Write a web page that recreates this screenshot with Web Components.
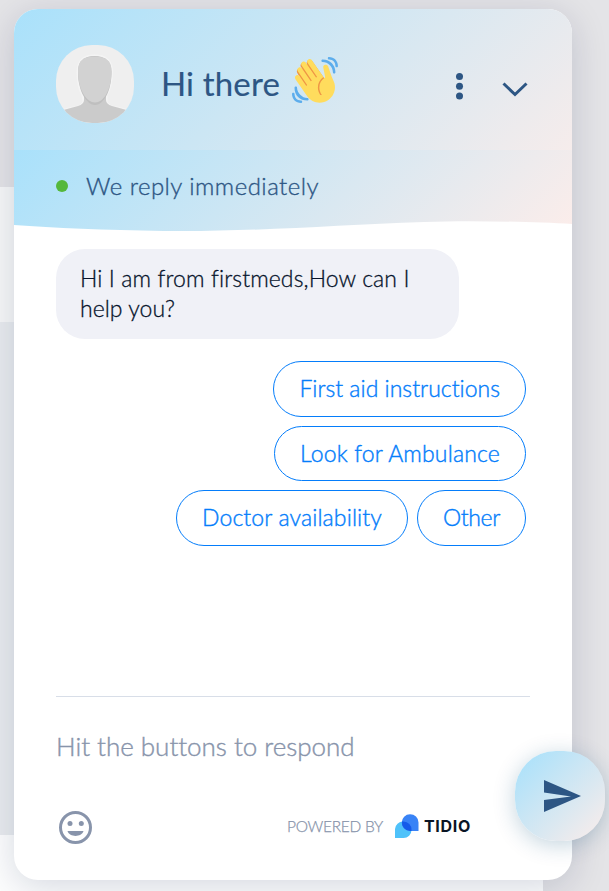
<!DOCTYPE html>
<html lang="en">
<head>
<meta charset="utf-8">
<title>Chat</title>
<style>
html,body{margin:0;height:891px;overflow:hidden}
body{font-family:Lato,"Open Sans",sans-serif;background:linear-gradient(#f7f8f8,#f7f8f8) 0 187px/14px 135px no-repeat,linear-gradient(#fdfefe,#fdfefe) 0 835px/543px 56px no-repeat,linear-gradient(#e9ecef,#e9ecef) 0 322px/14px 513px no-repeat,#e4e4e7}
</style>
</head>
<body>
<chat-window></chat-window>
<script>
const define = (name, html, setup) => customElements.define(name, class extends HTMLElement {
  connectedCallback() {
    if (this.shadowRoot) return;
    this.attachShadow({mode: 'open'}).innerHTML = html;
    if (setup) setup.call(this, this.shadowRoot);
  }
});

/* A single line of text whose tracking is adjusted to fill the given width. */
define('fit-line', `<style>:host{display:block;white-space:nowrap}span{display:inline-block}</style><span><slot></slot></span>`, function (root) {
  const span = root.querySelector('span');
  const target = +this.getAttribute('w');
  const spacing = (target - span.getBoundingClientRect().width) / this.textContent.length;
  span.style.letterSpacing = spacing.toFixed(3) + 'px';
});

define('user-avatar', `<style>:host{display:block;width:78px;height:78px;border-radius:36px;overflow:hidden;background:#efefef}svg{display:block}</style>
<svg width="78" height="78" viewBox="0 0 78 78"><path d="M0 67 22 62Q28 60 28 56L27 50Q22 42 22 27 22 11 38.500 11 55.500 11 55.500 27 55 42 50 50V56Q50 60 56 62L78 67V78H0Z" fill="none" stroke="#f4f4f4" stroke-width="3"/><path d="M0 67 22 61Q28 59 28 55V47H50V55Q50 59 56 61L78 67V78H0Z" fill="#cbcbcb"/><path d="M22 27C22 16 28 11 38.500 11S55.500 16 55.500 27C55.500 47 47 60 39 60S22 47 22 27Z" fill="#bfbfbf"/><path d="M22 26C22 15 28 11.500 38.500 11.500S55.500 15 55.500 26C55.500 46 47 57.500 39 57.500S22 46 22 26Z" fill="#d2d2d2"/></svg>`);

define('wave-emoji', `<style>:host{display:block}svg{display:block}</style><svg width="46" height="46" viewBox="0 0 36 36"><path fill="#EF9645" d="M4.861 9.147c.94-.657 2.357-.531 3.201.166l-.968-1.407c-.779-1.111-.5-2.313.612-3.093 1.112-.777 4.263 1.312 4.263 1.312-.786-1.122-.639-2.544.483-3.331 1.122-.784 2.67-.513 3.456.611l10.292 14.593L25 31l-12.349-4.25L4.237 12.626c-.793-1.125-.53-2.679.624-3.479z"/><path fill="#FFDC5D" d="M2.695 17.336s-1.132-1.65.519-2.781c1.649-1.131 2.78.518 2.78.518l5.251 7.658c.181-.302.379-.6.6-.894L4.557 11.21s-1.131-1.649.519-2.78c1.649-1.131 2.78.518 2.78.518l6.855 9.997c.255-.208.516-.417.785-.622L7.549 6.732s-1.131-1.649.519-2.78c1.649-1.131 2.78.518 2.78.518l7.947 11.589c.292-.179.581-.334.871-.498L12.238 4.729s-1.131-1.649.518-2.78c1.649-1.131 2.78.518 2.78.518l7.854 11.454 1.194 1.742c-4.948 3.394-5.419 9.779-2.592 13.902.565.825 1.39.26 1.39.26-3.393-4.949-2.357-10.51 2.592-13.903L24.515 8.62s-.545-1.924 1.378-2.47c1.924-.545 2.47 1.379 2.47 1.379l1.685 5.004c.668 1.984 1.379 3.961 2.32 5.831 2.657 5.28 1.07 11.842-3.94 15.279-5.465 3.747-12.936 2.354-16.684-3.11L2.695 17.336z"/><path fill="#5DADEC" d="M12 32.042C8 32.042 3.958 28 3.958 24c0-.553-.405-1-.958-1s-1.042.447-1.042 1C1.958 30 6 34.042 12 34.042c.553 0 1-.489 1-1.042s-.447-.958-1-.958z"/><path fill="#5DADEC" d="M7 34c-3 0-5-2-5-5 0-.553-.447-1-1-1s-1 .447-1 1c0 4 3 7 7 7 .553 0 1-.447 1-1s-.447-1-1-1zM24 2c-.552 0-1 .448-1 1s.448 1 1 1c4 0 8 3.589 8 8 0 .552.448 1 1 1s1-.448 1-1c0-5.514-4-10-10-10z"/><path fill="#5DADEC" d="M29 .042c-.552 0-1 .406-1 .958s.448 1.042 1 1.042c3 0 4.958 2.225 4.958 4.958 0 .552.489 1 1.042 1s.958-.448.958-1C35.958 3.163 33 .042 29 .042z"/></svg>`);

define('chat-header', `<style>
:host{display:block;color:#2d5684}
.top{height:141px;box-sizing:border-box;padding:36px 42px 0;display:flex;align-items:flex-start;background:linear-gradient(135deg,#a9e1fb,#fcedea) 0 0/558px 196px no-repeat}
fit-line{font-size:33px;line-height:40px;font-weight:400;-webkit-text-stroke:.15px #2d5684;margin:18px 12px 0 27px;width:119px}
wave-emoji{margin-top:12px}
.menu{margin:27px 0 0 117px}.down{margin:36px 0 0 37px}svg{display:block;flex:none}
.status{height:82px;background:linear-gradient(135deg,#a9e1fb,#fcedea);clip-path:path("M0 0H558V74C520 72 460 70 410 72C320 75 240 82 150 81C90 80 40 78 0 75Z");display:flex;align-items:flex-start;padding-left:42px}
i{width:12px;height:12px;border-radius:50%;background:#55b83c;margin-top:30px}
.status fit-line{font-size:24px;line-height:30px;font-weight:300;-webkit-text-stroke:.35px #2d5684;margin:21px 0 0 18px;width:233px}
</style>
<div class="top"><user-avatar></user-avatar><fit-line w="119">Hi there</fit-line><wave-emoji></wave-emoji>
<svg class="menu" width="9" height="30"><g fill="#2d5684"><circle cx="4.500" cy="4.500" r="3.500"/><circle cx="4.500" cy="14.200" r="3.500"/><circle cx="4.500" cy="24" r="3.500"/></g></svg>
<svg class="down" width="28" height="18"><path d="M2.500 2.500 14 13.500 25.500 2.500" fill="none" stroke="#2d5684" stroke-width="3"/></svg></div>
<div class="status"><i></i><fit-line w="233">We reply immediately</fit-line></div>`);

define('chat-bubble', `<style>:host{display:block;width:403px;height:90px;box-sizing:border-box;padding:14px 24px;border-radius:29px;background:#f0f1f7;color:#06132b;font-size:23px;font-weight:300;-webkit-text-stroke:.3px #06132b;line-height:30px}</style><slot></slot>`);

define('quick-reply', `<style>:host{display:block;box-sizing:border-box;height:56px;padding:0 25px;border:1px solid #047dfb;border-radius:28px;color:#047dfb;font-size:23px;font-weight:300;-webkit-text-stroke:.4px #047dfb;line-height:52px}</style><slot></slot>`);

define('chat-footer', `<style>
:host{display:block;margin:0 42px;width:474px;height:184px;color:#8894ab;box-sizing:border-box;border-top:1px solid #d8dee8}
.prompt{font-size:26px;line-height:32px;margin-top:33px;font-weight:300;-webkit-text-stroke:.4px #8894ab}
.row{display:flex;align-items:flex-start;margin-top:48px}
svg{display:block;flex:none}.smile{margin-left:2px;margin-top:1px}
.by{font-size:15.500px;line-height:20px;width:96px;margin:6px 0 0 195px;font-weight:300;-webkit-text-stroke:.25px #8894ab}
.logo{margin:4px 0 0 12px}
.name{font:700 16px/22px Inter,sans-serif;color:#0b1525;width:47px;margin:5px 0 0 5px}
</style>
<fit-line class="prompt" w="298">Hit the buttons to respond</fit-line>
<div class="row"><svg class="smile" width="34" height="34" viewBox="0 0 34 34"><circle cx="17.500" cy="16.500" r="15" fill="none" stroke="#8894ab" stroke-width="3"/><g fill="#8894ab"><circle cx="12" cy="12.500" r="2.500"/><circle cx="23.300" cy="12.500" r="2.500"/><path d="M9.500 20H25.500C23.500 26.500 11.500 26.500 9.500 20Z"/></g></svg>
<fit-line class="by" w="96">POWERED BY</fit-line>
<svg class="logo" width="24" height="25" viewBox="0 0 24 25"><path d="M0 24V15A8 8 0 0 1 8 7.500H16.500V16A8 8 0 0 1 8.500 24Z" fill="#4fc2fa"/><path d="M23.500 17H15A8.400 8.400 0 1 1 23.500 8.500Z" fill="#3983f6"/><path d="M7 7.500H8.500A8 8 0 0 1 16.500 16V17H15A8.400 8.400 0 0 1 7 7.500Z" fill="#155be9"/></svg>
<fit-line class="name" w="47">TIDIO</fit-line></div>`);

define('send-button', `<style>:host{display:block;width:90px;height:90px;border-radius:41px;background:linear-gradient(135deg,#a9e1fb 5%,#fcedea);box-shadow:0 4px 22px rgba(0,77,115,.24)}svg{display:block}</style><svg width="90" height="90"><path d="M29 29 66 45 29 61V49L56 45.500 29 41.500Z" fill="#2d5684"/></svg>`);

define('chat-window', `<style>
:host{display:block;padding:9px 0 0 14px}
.card{width:558px;height:871px;background:#fff;border-radius:24px;box-shadow:0 7px 36px rgba(0,18,70,.16);display:flex;flex-direction:column}
chat-header{border-radius:24px 24px 0 0;overflow:hidden;height:223px;flex:none}
.talk{flex:1;padding:17px 46px 0 42px}
.replies{margin-top:22px;display:flex;flex-direction:column;align-items:flex-end;gap:9px}
.replies>:nth-child(2){height:55px}.pair{display:flex;gap:9px}
send-button{position:absolute;left:515px;top:751px}
</style>
<div class="card"><chat-header></chat-header>
<div class="talk"><chat-bubble><fit-line w="329">Hi I am from firstmeds,How can I</fit-line><fit-line w="95">help you?</fit-line></chat-bubble>
<div class="replies"><quick-reply><fit-line w="201">First aid instructions</fit-line></quick-reply><quick-reply><fit-line w="200">Look for Ambulance</fit-line></quick-reply><div class="pair"><quick-reply><fit-line w="180">Doctor availability</fit-line></quick-reply><quick-reply><fit-line w="57">Other</fit-line></quick-reply></div></div></div>
<chat-footer></chat-footer></div><send-button></send-button>`);
</script>
</body>
</html>
